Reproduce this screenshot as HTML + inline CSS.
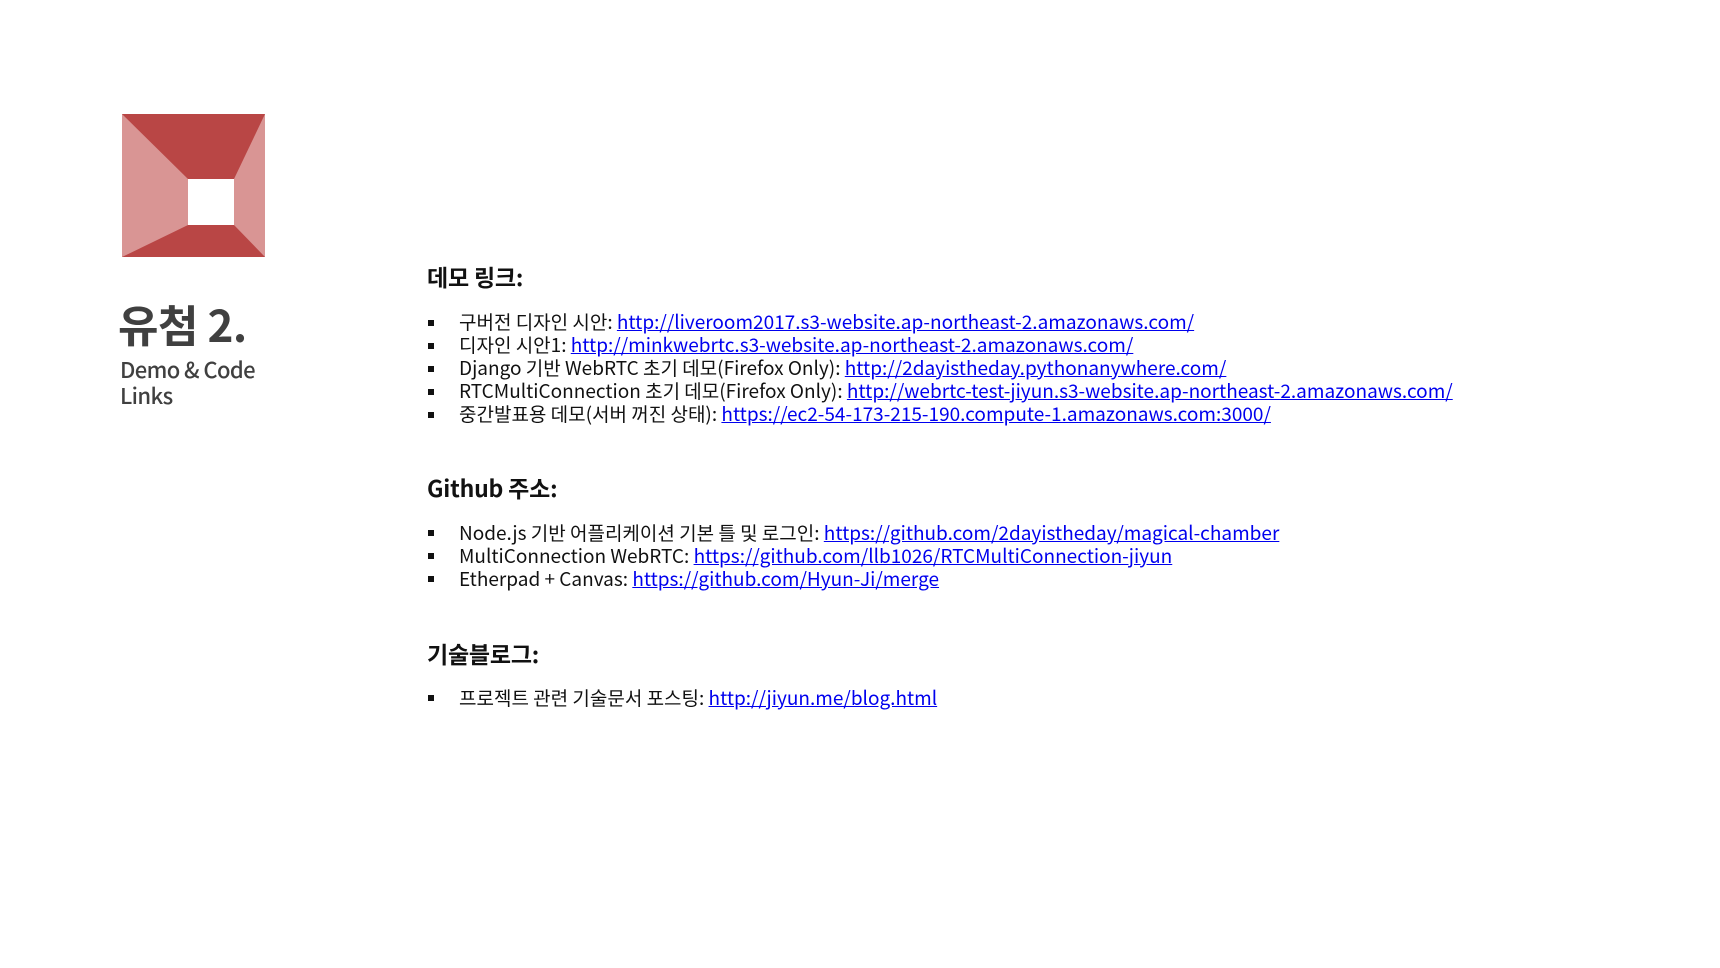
<!DOCTYPE html>
<html><head><meta charset="utf-8"><style>
html,body{margin:0;padding:0;background:#fff;width:1720px;height:968px;overflow:hidden;font-family:"Noto Sans CJK KR","Liberation Sans",sans-serif;}
.a{position:absolute;white-space:nowrap;}
.h{font-size:23px;font-weight:700;color:#111;line-height:30px;letter-spacing:-0.2px}
.l{font-size:19px;color:#111;line-height:23px;letter-spacing:0}
.l a{color:#0000ee;text-decoration:underline}
.b{position:absolute;width:6px;height:6px;background:#111;}
</style></head><body>
<svg class="a" style="left:122px;top:114px" width="143" height="143" viewBox="0 0 143 143">
<rect width="143" height="143" fill="#d99594"/>
<polygon points="0,0 143,0 112,65 66,65" fill="#b94645"/>
<polygon points="0,143 66,111 112,111 143,143" fill="#b94645"/>
<rect x="66" y="65" width="46" height="46" fill="#fff"/>
</svg>
<div class="a" style="left:118px;top:295px;font-size:44px;font-weight:700;color:#404040;line-height:56px;letter-spacing:-0.5px">유첨 2.</div>
<div class="a" style="left:120px;top:356px;font-size:22px;font-weight:500;color:#404040;line-height:26px;letter-spacing:-0.6px">Demo &amp; Code<br>Links</div>

<div class="a h" style="left:427px;top:261px">데모 링크:</div>
<div class="b" style="left:428px;top:320px"></div>
<div class="b" style="left:428px;top:343px"></div>
<div class="b" style="left:428px;top:366px"></div>
<div class="b" style="left:428px;top:389px"></div>
<div class="b" style="left:428px;top:412px"></div>
<div class="a l" style="left:459px;top:310px">구버전 디자인 시안: <a>http://liveroom2017.s3-website.ap-northeast-2.amazonaws.com/</a><br>디자인 시안1: <a>http://minkwebrtc.s3-website.ap-northeast-2.amazonaws.com/</a><br>Django 기반 WebRTC 초기 데모(Firefox Only): <a>http://2dayistheday.pythonanywhere.com/</a><br>RTCMultiConnection 초기 데모(Firefox Only): <a>http://webrtc-test-jiyun.s3-website.ap-northeast-2.amazonaws.com/</a><br>중간발표용 데모(서버 꺼진 상태): <a>https://ec2-54-173-215-190.compute-1.amazonaws.com:3000/</a></div>

<div class="a h" style="left:427px;top:472px">Github 주소:</div>
<div class="b" style="left:428px;top:530px"></div>
<div class="b" style="left:428px;top:553px"></div>
<div class="b" style="left:428px;top:576px"></div>
<div class="a l" style="left:459px;top:521px">Node.js 기반 어플리케이션 기본 틀 및 로그인: <a>https://github.com/2dayistheday/magical-chamber</a><br>MultiConnection WebRTC: <a>https://github.com/llb1026/RTCMultiConnection-jiyun</a><br>Etherpad + Canvas: <a>https://github.com/Hyun-Ji/merge</a></div>

<div class="a h" style="left:427px;top:638px">기술블로그:</div>
<div class="b" style="left:428px;top:695px"></div>
<div class="a l" style="left:459px;top:686px">프로젝트 관련 기술문서 포스팅: <a>http://jiyun.me/blog.html</a></div>
</body></html>
